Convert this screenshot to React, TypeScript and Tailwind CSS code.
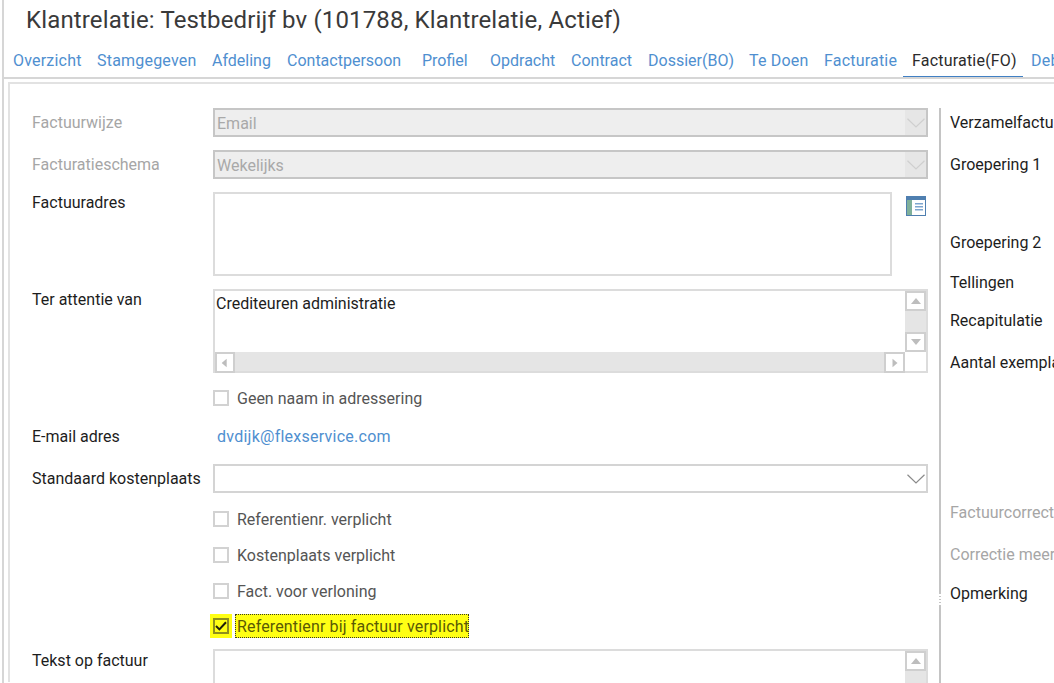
import React from "react";

const tabs = [
  { t: "Overzicht", c: "w-[84px] pl-[5px]" },
  { t: "Stamgegeven", c: "w-[115px] pl-[5px]" },
  { t: "Afdeling", c: "w-[75px] pl-[5px] tracking-normal" },
  { t: "Contactpersoon", c: "w-[135px] pl-[5px] tracking-normal" },
  { t: "Profiel", c: "w-[68px] pl-[5px] tracking-normal" },
  { t: "Opdracht", c: "w-[81px] pl-[5px] tracking-normal" },
  { t: "Contract", c: "w-[77px] pl-[5px] tracking-normal" },
  { t: "Dossier(BO)", c: "w-[101px] pl-[5px] tracking-normal" },
  { t: "Te Doen", c: "w-[75px] pl-[5px]" },
  { t: "Facturatie", c: "w-[84px] pl-[5px]" },
];

function Chevron({ color }: { color: string }) {
  return (
    <svg width="18" height="10" viewBox="0 0 18 10" fill="none" stroke={color} strokeWidth="1.2">
      <path d="M0.5 0.8 L9 9 L17.5 0.8" />
    </svg>
  );
}

function Select({ value, disabled }: { value?: string; disabled?: boolean }) {
  return (
    <div
      className={
        "flex h-[29px] w-[715px] items-center justify-between border-2 " +
        (disabled
          ? "border-[#c6c6c6] bg-[#eeeeee] text-[#a9a9a9]"
          : "border-[#d4d4d4] bg-white")
      }
    >
      <span className="pl-[2px] pt-[2px] text-[16px] leading-[22px]">{value}</span>
      <span
        className={
          "flex h-full w-[21px] items-center justify-center " + (disabled ? "bg-[#e6e6e6]" : "")
        }
      >
        <Chevron color={disabled ? "#cfcfcf" : "#8a8a8a"} />
      </span>
    </div>
  );
}

function Check({ checked }: { checked?: boolean }) {
  return (
    <span
      className={
        "flex h-[16px] w-[16px] shrink-0 items-center justify-center border-2 " +
        (checked ? "border-[#8f8f1c] bg-[#ffff14]" : "border-[#d2d2d2] bg-white")
      }
    >
      {checked && (
        <svg width="12" height="10" viewBox="0 0 12 10" fill="none" stroke="#20200a" strokeWidth="2">
          <path d="M1 5 L4.4 8.4 L11 1.2" />
        </svg>
      )}
    </span>
  );
}

function CheckRow({ label, h, className }: { label: string; h: string; className?: string }) {
  return (
    <div className={"flex items-center gap-[8px] pl-[181px] text-[16px] leading-[22px] text-[#555555] " + h + " " + (className ?? "")}>
      <Check />
      <span className="pt-[1px]">{label}</span>
    </div>
  );
}

function ArrowBtn({ dir, className }: { dir: "up" | "down" | "left" | "right"; className: string }) {
  const d = {
    up: "M1 8 L6 2 L11 8 Z",
    down: "M1 2 L6 8 L11 2 Z",
    left: "M8 0 L2 5 L8 10 Z",
    right: "M3 0 L9 5 L3 10 Z",
  }[dir];
  const size = dir === "up" || dir === "down" ? "w-[12px] h-[10px]" : "w-[10px] h-[10px]";
  return (
    <span className={"flex shrink-0 items-center justify-center border-2 border-[#cfcfcf] bg-white " + className}>
      <svg className={size} viewBox="0 0 12 10" fill="#bdbdbd">
        <path d={d} />
      </svg>
    </span>
  );
}

function Label({ children, muted, h, className }: { children: React.ReactNode; muted?: boolean; h: string; className?: string }) {
  return (
    <div className={"flex w-[181px] shrink-0 whitespace-nowrap text-[16px] leading-[22px] " + (muted ? "text-[#a6a6a6] " : "text-[#1d1d1d] ") + h + " " + (className ?? "")}>
      {children}
    </div>
  );
}

function SideLabel({ children, muted, mt }: { children: React.ReactNode; muted?: boolean; mt: string }) {
  return (
    <div className={"h-[20px] whitespace-nowrap text-[16px] leading-[20px] " + (muted ? "text-[#a6a6a6] " : "text-[#1d1d1d] ") + mt}>
      {children}
    </div>
  );
}

export default function App() {
  return (
    <div
      className="h-[683px] w-[1054px] overflow-hidden bg-white"
      style={{ fontFamily: "Roboto, 'Open Sans', sans-serif" }}
    >
      <div className="ml-[2px] h-full border-l-2 border-[#d6d6d6]">
        <h1 className="h-[42px] pl-[22px] pt-[5px] text-[24px] leading-[30px] font-normal tracking-[0.15px] whitespace-nowrap text-[#3a3a3a]">
          Klantrelatie: Testbedrijf bv (101788, Klantrelatie, Actief)
        </h1>

        <div className="flex h-[37px] items-stretch overflow-hidden border-b-2 border-[#d6d6d6] pl-[4px] text-[16px] tracking-[0.2px] whitespace-nowrap text-[#4f8fd0]">
          {tabs.map((x) => (
            <div key={x.t} className={"shrink-0 pt-[8px] leading-[22px] " + x.c}>
              {x.t}
            </div>
          ))}
          <div className="h-[37px] w-[120px] shrink-0 border-b-[3px] border-[#4080c4] pl-[9px] pt-[8px] leading-[22px] text-[#2b2b2b]">
            Facturatie(FO)
          </div>
          <div className="shrink-0 pl-[8px] pt-[8px] leading-[22px]">Debiteur</div>
        </div>

        <div className="ml-[4px] mt-[3px] flex h-[600px] border-l-2 border-t-2 border-[#e2e2e2]">
          {/* left column */}
          <div className="relative mt-[24px] h-[576px] w-[931px] shrink-0 border-r-2 border-[#c4c4c4] pl-[22px]">
            <div className="flex h-[42px]">
              <Label muted h="h-[42px]" className="pt-[4px]">Factuurwijze</Label>
              <Select value="Email" disabled />
            </div>
            <div className="flex h-[42px]">
              <Label muted h="h-[42px]" className="pt-[4px]">Facturatieschema</Label>
              <Select value="Wekelijks" disabled />
            </div>
            <div className="flex h-[97px]">
              <Label h="h-[97px]">Factuuradres</Label>
              <div className="h-[84px] w-[679px] border-2 border-[#dcdcdc]" />
              <svg className="ml-[14px] mt-[4px]" width="20" height="20" viewBox="0 0 20 20">
                <rect x="0" y="0" width="20" height="20" fill="#4f7fb0" />
                <rect x="1" y="4" width="5" height="15" fill="#7fb09a" />
                <rect x="6" y="4" width="13" height="15" fill="#ffffff" />
                <rect x="9" y="7" width="8" height="1.5" fill="#7ea6cf" />
                <rect x="9" y="10" width="8" height="1.5" fill="#7ea6cf" />
                <rect x="9" y="13" width="8" height="1.5" fill="#7ea6cf" />
              </svg>
            </div>
            <div className="flex h-[100px]">
              <Label h="h-[100px]">Ter attentie van</Label>
              <div className="flex h-[84px] w-[715px] flex-col border-2 border-[#dcdcdc]">
                <div className="flex h-[61px]">
                  <div className="flex-1 pl-[1px] pt-[3px] text-[16px] leading-[20px] text-[#1d1d1d]">
                    Crediteuren administratie
                  </div>
                  <div className="flex w-[21px] flex-col bg-[#e5e5e5]">
                    <ArrowBtn dir="up" className="h-[20px] w-[21px]" />
                    <div className="flex-1" />
                    <ArrowBtn dir="down" className="h-[20px] w-[21px]" />
                  </div>
                </div>
                <div className="flex h-[19px]">
                  <div className="flex flex-1 justify-between bg-[#e5e5e5]">
                    <ArrowBtn dir="left" className="h-[21px] w-[20px]" />
                    <ArrowBtn dir="right" className="h-[21px] w-[21px]" />
                  </div>
                  <div className="w-[21px]" />
                </div>
              </div>
            </div>

            <CheckRow label="Geen naam in adressering" h="h-[18px]" />
            <div className="mt-[19px] flex h-[20px] items-center">
              <Label h="h-[20px] items-center" className="pt-[1px]">E-mail adres</Label>
              <span className="pl-[4px] pt-[1px] text-[16px] leading-[22px] tracking-[0.25px] text-[#4f8fd0]">dvdijk@flexservice.com</span>
            </div>
            <div className="mt-[18px] flex">
              <Label h="h-[29px] items-center">Standaard kostenplaats</Label>
              <Select />
            </div>
            <CheckRow label="Referentienr. verplicht" h="h-[18px]" className="mt-[17px]" />
            <CheckRow label="Kostenplaats verplicht" h="h-[18px]" className="mt-[18px]" />
            <CheckRow label="Fact. voor verloning" h="h-[18px]" className="mt-[18px]" />

            <div className="mt-[14px] flex h-[24px] items-center pl-[178px]">
              <div className="flex h-[24px] items-center bg-[#ffff14] pl-[3px] pr-[3px]">
                <Check checked />
              </div>
              <span className="ml-[3px] flex h-[24px] w-[234px] items-center border border-dotted border-[#3a3a20] bg-[#ffff14] pl-[1px] pt-[1px] text-[16px] leading-[22px] tracking-[0.15px] whitespace-nowrap text-[#5a5a05]">
                Referentienr bij factuur verplicht
              </span>
            </div>

            <div className="mt-[11px] flex">
              <Label h="h-[40px]" className="pt-[1px]">Tekst op factuur</Label>
              <div className="flex h-[60px] w-[715px] justify-end border-2 border-[#dcdcdc]">
                <div className="flex w-[21px] flex-col bg-[#e5e5e5]">
                  <ArrowBtn dir="up" className="h-[20px] w-[21px]" />
                </div>
              </div>
            </div>

            {/* splitter grip */}
            <div className="absolute right-[-2px] top-[486px] h-[12px] w-[2px] bg-[repeating-linear-gradient(to_bottom,#ffffff_0,#ffffff_2px,#c4c4c4_2px,#c4c4c4_3px)]" />
          </div>

          {/* right column */}
          <div className="overflow-hidden pl-[9px] pt-[29px]">
            <SideLabel mt="">Verzamelfacturen</SideLabel>
            <SideLabel mt="mt-[22px]">Groepering 1</SideLabel>
            <SideLabel mt="mt-[58px]">Groepering 2</SideLabel>
            <SideLabel mt="mt-[20px]">Tellingen</SideLabel>
            <SideLabel mt="mt-[18px]">Recapitulatie</SideLabel>
            <SideLabel mt="mt-[22px]">Aantal exemplaren</SideLabel>
            <SideLabel muted mt="mt-[130px]">Factuurcorrectie</SideLabel>
            <SideLabel muted mt="mt-[22px]">Correctie meer</SideLabel>
            <SideLabel mt="mt-[19px]">Opmerking</SideLabel>
          </div>
        </div>
      </div>
    </div>
  );
}
